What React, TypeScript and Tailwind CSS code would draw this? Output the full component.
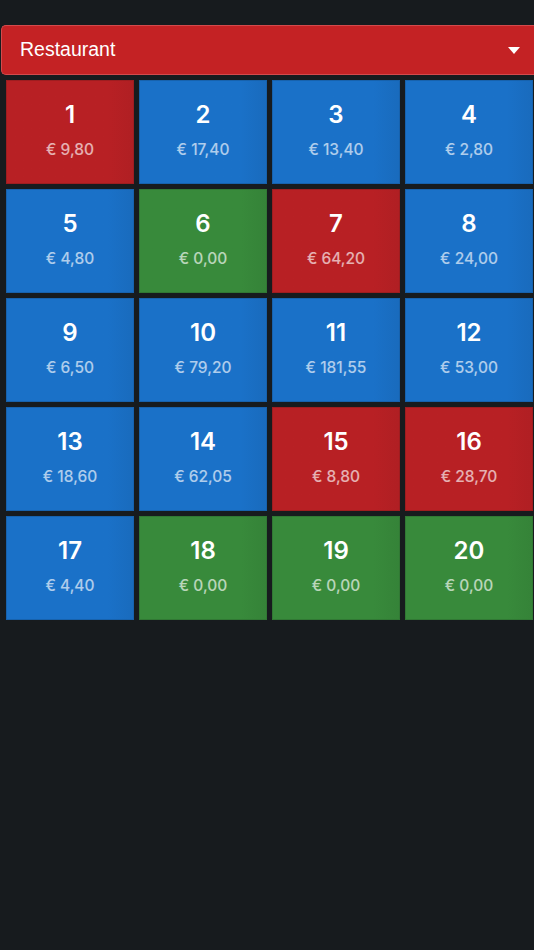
import React from "react";

type T = { n: number; a: string; c: "r" | "b" | "g" };

const tables: T[] = [
  { n: 1, a: "9,80", c: "r" },
  { n: 2, a: "17,40", c: "b" },
  { n: 3, a: "13,40", c: "b" },
  { n: 4, a: "2,80", c: "b" },
  { n: 5, a: "4,80", c: "b" },
  { n: 6, a: "0,00", c: "g" },
  { n: 7, a: "64,20", c: "r" },
  { n: 8, a: "24,00", c: "b" },
  { n: 9, a: "6,50", c: "b" },
  { n: 10, a: "79,20", c: "b" },
  { n: 11, a: "181,55", c: "b" },
  { n: 12, a: "53,00", c: "b" },
  { n: 13, a: "18,60", c: "b" },
  { n: 14, a: "62,05", c: "b" },
  { n: 15, a: "8,80", c: "r" },
  { n: 16, a: "28,70", c: "r" },
  { n: 17, a: "4,40", c: "b" },
  { n: 18, a: "0,00", c: "g" },
  { n: 19, a: "0,00", c: "g" },
  { n: 20, a: "0,00", c: "g" },
];

function Tile({ t }: { t: T }) {
  const cls =
    t.c === "r"
      ? "bg-gradient-to-r from-[#b82024] from-80% to-[#b01f23] border-[#9e1d20]"
      : t.c === "g"
      ? "bg-gradient-to-r from-[#388a3b] from-80% to-[#358338] border-[#317834]"
      : "bg-gradient-to-r from-[#1a71c8] from-80% to-[#196bbd] border-[#1762ad]";
  return (
    <div
      className={`h-[104px] border flex flex-col items-center text-white ${cls}`}
      style={{ fontFamily: "Inter, 'Noto Sans', sans-serif" }}
    >
      <div className="mt-[20px] text-[24px] leading-[28px] font-semibold">{t.n}</div>
      <div className="mt-[11px] text-[15.5px] leading-[20px] font-medium text-white/65">
        € {t.a}
      </div>
    </div>
  );
}

export default function App() {
  return (
    <div className="min-h-[950px] w-[534px] bg-[#171b1e] pt-[25px]">
      <div
        className="ml-[1px] h-[50px] bg-[#c42224] border border-r-0 border-[#d44a4c] rounded-l-[5px] flex items-center justify-between pl-[18px] pr-[14px]"
        style={{ fontFamily: "'Liberation Sans', Arial, sans-serif" }}
      >
        <span className="text-white text-[19.5px]">Restaurant</span>
        <svg width="12" height="7" viewBox="0 0 12 7">
          <polygon points="0,0 12,0 6,7" fill="#ffffff" />
        </svg>
      </div>
      <div className="mt-[5px] pl-[6px] pr-[1px] grid grid-cols-4 gap-[5px]">
        {tables.map((t) => (
          <Tile key={t.n} t={t} />
        ))}
      </div>
    </div>
  );
}
